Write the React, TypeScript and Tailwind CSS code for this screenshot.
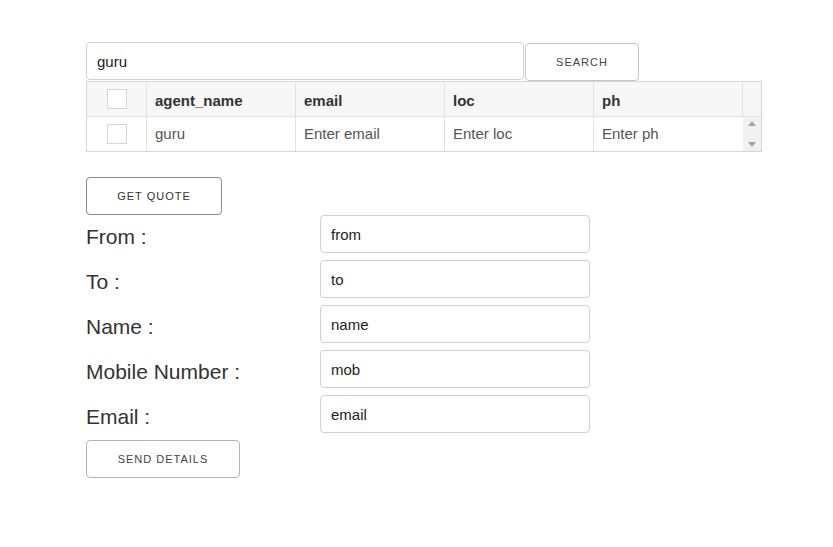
import React from "react";

const cols = ["agent_name", "email", "loc", "ph"];
const row = ["guru", "Enter email", "Enter loc", "Enter ph"];

const fields = [
  { label: "From :", value: "from" },
  { label: "To :", value: "to" },
  { label: "Name :", value: "name" },
  { label: "Mobile Number :", value: "mob" },
  { label: "Email :", value: "email" },
];

function Box() {
  return <span className="block w-[20px] h-[20px] border border-[#d4d4d4] bg-white" />;
}

export default function App() {
  return (
    <div className="min-h-screen bg-white pt-[42px] pl-[86px] font-[Liberation_Sans,Arial,sans-serif] text-[#333]">
      {/* Search */}
      <div className="flex items-start">
        <input
          readOnly
          value="guru"
          className="w-[438px] h-[38px] border border-[#d0d0d0] rounded-[4px] px-[10px] text-[15px] text-[#222] outline-none"
        />
        <button className="ml-[1px] mt-[1px] w-[114px] h-[38px] border border-[#c4c4c4] rounded-[4px] bg-white text-[11px] font-medium tracking-[1px] text-[#444]">
          SEARCH
        </button>
      </div>

      {/* Table */}
      <div className="w-[676px] border border-[#d6d6d6] text-[15px]">
        <div className="flex h-[35px] bg-[#f7f7f7] border-b border-[#e2e2e2]">
          <div className="w-[60px] flex items-center justify-center border-r border-[#e2e2e2]">
            <Box />
          </div>
          {cols.map((c) => (
            <div key={c} className="w-[149px] flex items-center pt-[4px] px-[8px] font-bold text-[#333] border-r border-[#e2e2e2]">
              {c}
            </div>
          ))}
          <div className="flex-1" />
        </div>
        <div className="flex h-[34px] bg-white">
          <div className="w-[60px] flex items-center justify-center border-r border-[#e2e2e2]">
            <Box />
          </div>
          {row.map((c, i) => (
            <div
              key={i}
              className={`w-[149px] flex items-center px-[8px] text-[#555] ${i < 3 ? "border-r border-[#e2e2e2]" : ""}`}
            >
              {c}
            </div>
          ))}
          <div className="flex-1 bg-[#f1f1f1] flex flex-col items-center justify-between py-[4px]">
            <svg width="8" height="5" viewBox="0 0 8 5"><path d="M4 0L8 5H0z" fill="#a3a3a3" /></svg>
            <svg width="8" height="5" viewBox="0 0 8 5"><path d="M0 0h8L4 5z" fill="#a3a3a3" /></svg>
          </div>
        </div>
      </div>

      <button className="mt-[25px] w-[136px] h-[38px] border border-[#8a8a8a] rounded-[4px] bg-white text-[11px] font-medium tracking-[1px] text-[#333]">
        GET QUOTE
      </button>

      {/* Form */}
      <div className="flex flex-col gap-[7px]">
        {fields.map((f) => (
          <div key={f.label} className="flex">
            <div className="w-[234px] pt-[10px] text-[21px] leading-[24px] text-[#333]">{f.label}</div>
            <input
              readOnly
              value={f.value}
              className="w-[270px] h-[38px] border border-[#d0d0d0] rounded-[4px] px-[10px] text-[15px] text-[#222] outline-none"
            />
          </div>
        ))}
      </div>

      <button className="mt-[7px] w-[154px] h-[38px] border border-[#b4b4b4] rounded-[4px] bg-white text-[11px] font-medium tracking-[1px] text-[#444]">
        SEND DETAILS
      </button>
    </div>
  );
}
